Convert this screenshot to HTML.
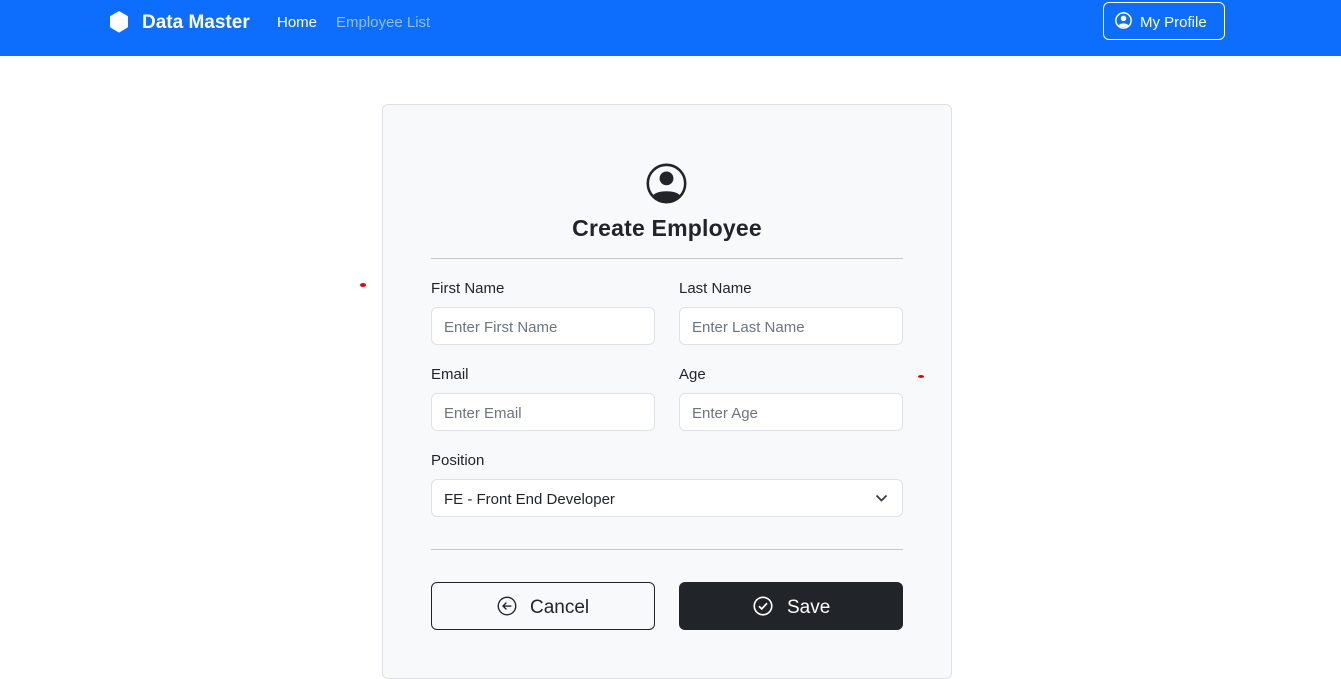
<!DOCTYPE html>
<html><head><style>
*{box-sizing:border-box;margin:0;padding:0}
body{width:1341px;height:679px;overflow:hidden;background:#fff;font-family:"Liberation Sans",sans-serif;color:#212529;position:relative}
.nav{position:absolute;left:0;top:0;width:1341px;height:56px;background:#0d6efd}
.abs{position:absolute}
.card{position:absolute;left:382px;top:104px;width:570px;height:575px;background:#f8f9fa;border:1px solid #dee2e6;border-radius:6px}
.lbl{position:absolute;font-size:15px;color:#212529}
.inp{position:absolute;width:224px;height:38px;background:#fff;border:1px solid #dee2e6;border-radius:6px;font-size:15px;color:#6c757d;padding:11px 12px 9px}
.hr{position:absolute;left:431px;width:472px;height:1px;background:#c4c6c8}
</style></head><body>
<div class="nav">
<svg class="abs" style="left:109px;top:11px" width="20" height="22" viewBox="0 0 20 22"><path d="M10 0 L19 5.3 V16.3 L10 21.6 L1 16.3 V5.3Z" fill="#fff"/></svg>
<div class="abs" style="left:142px;top:12px;font-size:19px;font-weight:bold;color:#fff">Data Master</div>
<div class="abs" style="left:277px;top:14px;font-size:15px;color:#fff">Home</div>
<div class="abs" style="left:336px;top:14px;font-size:15px;color:rgba(255,255,255,.55)">Employee List</div>
<div class="abs" style="left:1103px;top:2px;width:122px;height:38px;border:1px solid #fff;border-radius:6px"></div>
<svg class="abs" style="left:1115px;top:12px" width="17" height="17" viewBox="0 0 16 16"><circle cx="8" cy="8" r="7.2" fill="none" stroke="#fff" stroke-width="1.4"/><circle cx="8" cy="6" r="2.6" fill="#fff"/><path d="M3.3 12.6 C5 10 11 10 12.7 12.6 C11 14.8 5 14.8 3.3 12.6Z" fill="#fff"/></svg>
<div class="abs" style="left:1140px;top:14px;font-size:15px;color:#fff">My Profile</div>
</div>
<div class="card"></div>
<svg class="abs" style="left:646px;top:163px" width="41" height="41" viewBox="0 0 16 16"><circle cx="8" cy="8" r="7.3" fill="none" stroke="#212529" stroke-width="1"/><circle cx="8" cy="6" r="2.7" fill="#212529"/><path d="M2.6 12.8 C4 10.4 12 10.4 13.4 12.8 C11 15.8 5 15.8 2.6 12.8Z" fill="#212529"/></svg>
<div class="abs" style="left:382px;width:570px;top:215px;text-align:center;font-size:23px;font-weight:bold;letter-spacing:0.2px">Create Employee</div>
<div class="hr" style="top:258px"></div>
<div class="lbl" style="left:431px;top:280px">First Name</div>
<div class="lbl" style="left:679px;top:280px">Last Name</div>
<div class="inp" style="left:431px;top:307px">Enter First Name</div>
<div class="inp" style="left:679px;top:307px">Enter Last Name</div>
<div class="lbl" style="left:431px;top:366px">Email</div>
<div class="lbl" style="left:679px;top:366px">Age</div>
<div class="inp" style="left:431px;top:393px">Enter Email</div>
<div class="inp" style="left:679px;top:393px">Enter Age</div>
<div class="lbl" style="left:431px;top:452px">Position</div>
<div class="inp" style="left:431px;top:479px;width:472px;color:#212529">FE - Front End Developer</div>
<svg class="abs" style="left:875px;top:493px" width="13" height="10" viewBox="0 0 13 10"><path d="M1.5 2.5 L6.5 7.5 L11.5 2.5" fill="none" stroke="#343a40" stroke-width="1.8"/></svg>
<div class="hr" style="top:549px"></div>
<div class="abs" style="left:431px;top:582px;width:224px;height:48px;border:1px solid #212529;border-radius:6px"></div>
<svg class="abs" style="left:497px;top:596px" width="20" height="20" viewBox="0 0 16 16"><circle cx="8" cy="8" r="7" fill="none" stroke="#212529" stroke-width="1.1"/><path d="M11.5 8 H5 M7.5 5.3 L4.8 8 L7.5 10.7" fill="none" stroke="#212529" stroke-width="1.1"/></svg>
<div class="abs" style="left:530px;top:597px;font-size:19px">Cancel</div>
<div class="abs" style="left:679px;top:582px;width:224px;height:48px;background:#212529;border-radius:6px"></div>
<svg class="abs" style="left:753px;top:596px" width="20" height="20" viewBox="0 0 16 16"><circle cx="8" cy="8" r="7" fill="none" stroke="#fff" stroke-width="1.3"/><path d="M4.8 8.2 L7 10.3 L11.2 5.8" fill="none" stroke="#fff" stroke-width="1.4"/></svg>
<div class="abs" style="left:787px;top:597px;font-size:19px;color:#fff">Save</div>
<div class="abs" style="left:360px;top:283px;width:6px;height:4px;background:#e00;border-radius:50%"></div>
<div class="abs" style="left:918px;top:375px;width:6px;height:3px;background:#e00;border-radius:50%"></div>
</body></html>
